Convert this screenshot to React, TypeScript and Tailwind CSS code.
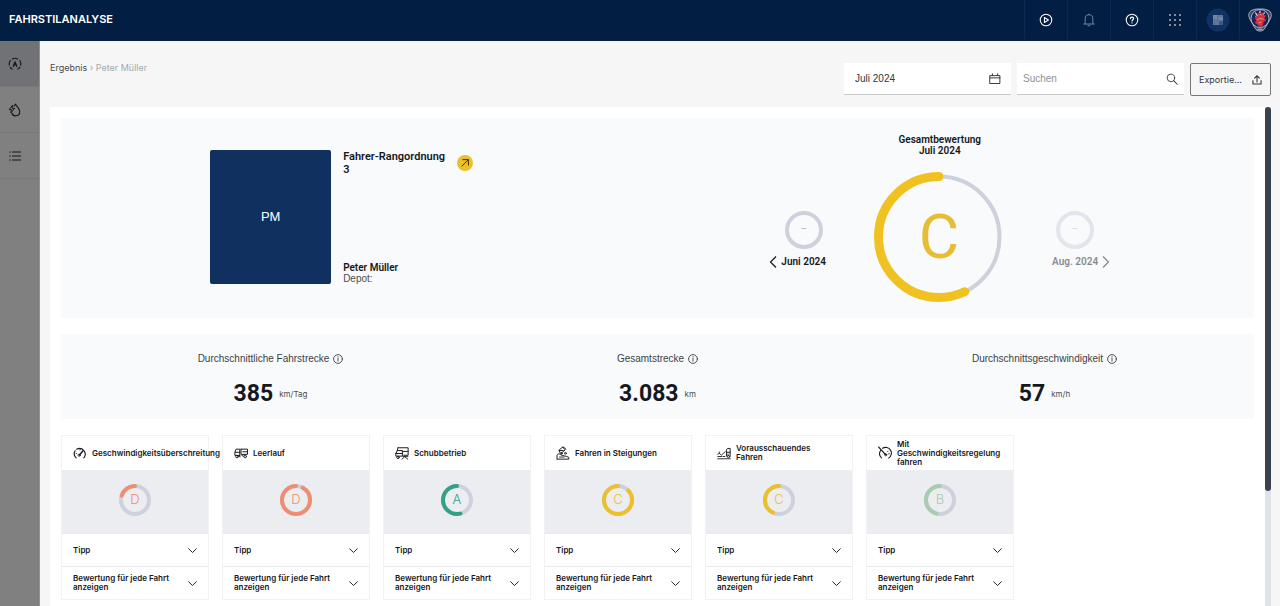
import type { ReactNode } from 'react';

type Grade = 'A' | 'B' | 'C' | 'D';

const gradeColors: Record<Grade, string> = {
  A: '#32a287',
  B: '#a9cbb0',
  C: '#ecc02c',
  D: '#ee8d72',
};

function Icon({ children, className = 'size-4', box = 16 }: { children: ReactNode; className?: string; box?: number }) {
  return (
    <svg className={`shrink-0 ${className}`} viewBox={`0 0 ${box} ${box}`} fill="none" stroke="currentColor" strokeWidth="1" strokeLinecap="round" strokeLinejoin="round" aria-hidden="true">
      {children}
    </svg>
  );
}

const SpeedIcon = () => (
  <Icon className="size-3.5">
    <path d="M3.6 13.6A6.600 6.600 0 0 1 2.400 5.400M4.200 3.600A6.600 6.600 0 0 1 12.400 13.600" strokeWidth="1.3" />
    <path d="M7.6 10L11.2 5.8" strokeWidth="1.6" />
    <circle cx="7" cy="10.6" r="1.2" />
    <path d="M3.6 8.5H4.2M8 4V4.6" />
  </Icon>
);

const TruckIdleIcon = () => (
  <Icon className="size-3.5">
    <path d="M6.6 10.8H1V7.4L2.4 3.6H6.6V10.8M1.2 7.2H6.6M8 3.6H15.4V9.6H8V3.6M10 6.6H15.4" strokeWidth="1.1" />
    <circle cx="3.4" cy="12" r="1.5" strokeWidth="1.1" />
    <circle cx="12.8" cy="12" r="1.5" strokeWidth="1.1" />
    <path d="M5 12.2H7M9 10.8L11.2 11.8" strokeWidth="1" />
  </Icon>
);

const CoastingIcon = () => (
  <Icon className="size-3.5">
    <path d="M3.4 2H15V10.6H10M1 8.6L2.6 5.2H8.4V8.6M1 8.6H8.4V11.6H1V8.6M3.4 2L2.6 5M8.4 6.2H15" strokeWidth="1.1" />
    <circle cx="3.4" cy="13" r="1.4" strokeWidth="1.1" />
    <path d="M8 15L11 12.2L14.6 15M9 11.8H14.8" strokeWidth="1.1" />
  </Icon>
);

const HillIcon = () => (
  <Icon className="size-3.5">
    <path d="M4.4 7.4L3.6 4.6L7.6 1.2L10.4 4.4L6.4 8M7.6 1.2L9.4 1.6L11 3.6M3.4 5L8.2 5.2" strokeWidth="1.1" />
    <path d="M1.2 14.6V10.4C3 7.8 4.6 9.8 6.4 10.4C9 11.4 11 11.2 14.6 13V15H1.2" strokeWidth="1.1" />
    <circle cx="6" cy="8.4" r="1.1" />
    <circle cx="10.8" cy="8.4" r="1.1" />
    <path d="M4 12.6H9.4" />
  </Icon>
);

const AnticipateIcon = () => (
  <Icon className="size-3.5">
    <path d="M10.8 11.6V4.4L12 2.8H15V11.6M10.8 7.2H15M12.6 9.2V11.2" strokeWidth="1.1" />
    <path d="M.8 9.4L3 8.4L5 10.6L9.4 6.4M1 12H5.6M7 12H9M.8 14.6H15.2M2.6 8.2V6.8" strokeWidth="1" />
    <circle cx="13.2" cy="12.2" r="1.3" />
  </Icon>
);

const CruiseIcon = () => (
  <Icon className="size-3.5">
    <path d="M5.2 2.6A6.6 6.6 0 1 1 12.2 13.8M3 5.2A6.6 6.6 0 0 0 4 13.6" strokeWidth="1.2" />
    <path d="M.8 1.2L8.4 9.6" strokeWidth="1.4" />
    <circle cx="8.8" cy="10" r="1.2" />
    <path d="M11.6 5.8l-.6.6M13 9h-.8" />
  </Icon>
);

const Chevron = () => (
  <svg className="w-[9px] h-[9px] shrink-0" viewBox="0 0 9 9" fill="none" stroke="#22252b" strokeWidth="1" aria-hidden="true">
    <path d="M.4 2.5L4.5 6.5L8.6 2.5" />
  </svg>
);

const InfoIcon = () => (
  <Icon className="size-2.5" box={10}>
    <circle cx="5" cy="5" r="4.4" strokeWidth=".9" />
    <path d="M5 4.4V7.2M5 2.6V3.1" strokeWidth=".9" />
  </Icon>
);

function GradeRing({ size, stroke, trackStroke = stroke, value, color, track = '#cdd1dd' }: { size: number; stroke: number; trackStroke?: number; value: number; color: string; track?: string }) {
  const c = size / 2;
  const r = (size - stroke) / 2;
  return (
    <svg width={size} height={size} viewBox={`0 0 ${size} ${size}`} fill="none" aria-hidden="true">
      <circle cx={c} cy={c} r={r} stroke={track} strokeWidth={trackStroke} />
      {value > 0 && (
        <circle r={r} stroke={color} strokeWidth={stroke} strokeLinecap="round" pathLength="100" strokeDasharray={`${value} 100`} transform={`translate(${c} ${c}) rotate(-90) scale(1 -1)`} />
      )}
    </svg>
  );
}

const categories: { title: string; icon: ReactNode; grade: Grade; value: number }[] = [
  { title: 'Geschwindigkeitsüberschreitung', icon: <SpeedIcon />, grade: 'D', value: 20 },
  { title: 'Leerlauf', icon: <TruckIdleIcon />, grade: 'D', value: 92 },
  { title: 'Schubbetrieb', icon: <CoastingIcon />, grade: 'A', value: 54 },
  { title: 'Fahren in Steigungen', icon: <HillIcon />, grade: 'C', value: 87 },
  { title: 'Vorausschauendes Fahren', icon: <AnticipateIcon />, grade: 'C', value: 43 },
  { title: 'Mit Geschwindigkeitsregelung fahren', icon: <CruiseIcon />, grade: 'B', value: 46 },
];

const stats = [
  { label: 'Durchschnittliche Fahrstrecke', value: '385', unit: 'km/Tag' },
  { label: 'Gesamtstrecke', value: '3.083', unit: 'km' },
  { label: 'Durchschnittsgeschwindigkeit', value: '57', unit: 'km/h' },
];

function Header() {
  const cell = 'w-[43px] h-full flex items-center justify-center border-l border-[#0d2950]';
  return (
    <header className="h-[41px] shrink-0 flex items-center justify-between bg-[#021e42] text-white overflow-hidden">
      <h1 className="pl-[9px] pb-1 font-[Inter,sans-serif] text-[11px] leading-4 font-semibold">FAHRSTILANALYSE</h1>
      <nav className="h-full flex pb-[2px]">
        <button className={cell} aria-label="Einführung">
          <Icon className="size-3.5">
            <circle cx="8" cy="8" r="6.6" strokeWidth="1.2" />
            <path d="M6.2 5.2V10.8L10.8 8Z" strokeWidth="1.2" />
          </Icon>
        </button>
        <button className={`${cell} text-[#7587a0]`} aria-label="Benachrichtigungen">
          <Icon className="size-3.5">
            <path d="M2 12.6H14M3.6 12.4V6.6A4.4 4.6 0 0 1 12.4 6.6V12.4M6.8 14.6H9.2M8 1.2V2" strokeWidth="1.1" />
          </Icon>
        </button>
        <button className={cell} aria-label="Hilfe">
          <Icon className="size-3.5">
            <circle cx="8" cy="8" r="6.6" strokeWidth="1.2" />
            <path d="M6.2 6.4C6.2 4.2 9.8 4.2 9.8 6.4C9.8 7.6 8 7.8 8 9.2M8 11.2V11.3" strokeWidth="1.4" />
          </Icon>
        </button>
        <button className={cell} aria-label="Anwendungen">
          <svg className="size-3" viewBox="0 0 12 12" fill="currentColor" aria-hidden="true">
            {[1, 6, 11].map((y) => [1, 6, 11].map((x) => <rect key={`${x}-${y}`} x={x - 0.7} y={y - 0.7} width="1.4" height="1.4" />))}
          </svg>
        </button>
        <button className={cell} aria-label="Profil">
          <svg className="size-6" viewBox="0 0 24 24" aria-hidden="true">
            <circle cx="12" cy="12" r="11.5" fill="#0f3263" />
            <rect x="7" y="7" width="10" height="10" fill="#5e7799" />
            <path d="M7 7h4v4H7zM13 9h4v3h-4z" fill="#7186a4" />
            <path d="M13 13h4v4h-4z" fill="#3f5b82" />
          </svg>
        </button>
        <a href="#" className="w-[41px] h-full flex items-center justify-center border-l border-[#0d2950]" aria-label="Startseite">
          <svg className="size-6" viewBox="0 0 24 24" fill="none" aria-hidden="true">
            <path d="M12 1C16.500 .6 20 1.800 22 3.500C24 6 23.400 9 22 11.500C20 14.500 18.500 18 16 21.500C14 23.600 10 23.600 8 21.500C5.500 18 4 14.500 2 11.500C.6 9 0 6 2 3.500C4 1.800 7.500 .6 12 1Z" fill="#3d4a6b" stroke="#c4c9d4" strokeWidth=".8" />
            <circle cx="12" cy="10.500" r="9" fill="#14245c" stroke="#e1e3ea" strokeWidth=".7" />
            <path d="M8 4.500L10 6L11 3.500L12.600 5.500L15.500 4L15 7L18 7.500L16.400 10L18 12.500L15.500 14L15 17.500L12.400 19L9.800 17L7 15L8.200 12L6.200 10L8.600 9Z" fill="#d5303c" />
            <path d="M7 8.500L10.500 7M9 12L12 10.500L15.500 11M10.500 15L13.500 14M12 6L13.800 7.500" stroke="#f3c7cc" strokeWidth=".6" />
            <path d="M7.500 4.500L8.500 7M12 2.500V5M16.500 4.500L15.500 6.500" stroke="#fff" strokeWidth="1" />
            <path d="M9.500 21.300H14.500" stroke="#c4c9d4" strokeWidth=".9" />
          </svg>
        </a>
      </nav>
    </header>
  );
}

function Sidebar() {
  const item = 'h-[46px] flex items-center pl-2 border-b border-[#777]';
  return (
    <aside className="w-10 shrink-0 bg-[#808080] border-r border-[#929292] text-[#15171b]">
      <a href="#" aria-label="Auswertung" className={`${item} bg-[#717276]`}>
        <Icon className="size-3.5">
          <path d="M5 2.200A6.600 6.600 0 0 1 11 2.200M2.600 4A6.600 6.600 0 0 0 1.500 9.400M13.400 4A6.600 6.600 0 0 1 14.500 9.400M2.600 11.800A6.600 6.600 0 0 0 4.600 13.800M13.400 11.800A6.600 6.600 0 0 1 11.400 13.800" strokeWidth="1.300" />
          <path d="M6 10.600L8 5.600L10 10.600M6.800 9H9.200" strokeWidth="1.500" />
        </Icon>
      </a>
      <a href="#" aria-label="Verbrauch" className={item}>
        <Icon className="size-3.5">
          <path d="M8.400 1.400C11 4.600 13.400 7 13.400 10A4.600 4.600 0 0 1 4.400 11.400M8.400 1.400L7 3.400" strokeWidth="1.300" />
          <path d="M5 2.800L1.400 7.600H4L3.200 11.200L7.600 6H5Z" strokeWidth="1.100" />
        </Icon>
      </a>
      <a href="#" aria-label="Liste" className={item}>
        <Icon className="size-3.5">
          <path d="M5 3.400H14.400M5 8H14.400M5 12.600H14.400M2 3.400H2.600M2 8H2.600M2 12.600H2.600" strokeWidth="1.200" />
        </Icon>
      </a>
    </aside>
  );
}

function Toolbar() {
  return (
    <div className="flex items-start justify-between pt-[22px] pb-[11px]">
      <nav className="font-[Inter,sans-serif] text-[9px] leading-[10px] text-[#4a4c52]">
        <a href="#">Ergebnis</a> <span className="text-[#a5a7b0]">› Peter Müller</span>
      </nav>
      <div className="flex gap-[6px] text-[#33363c]">
        <label className="w-[167px] h-8 flex items-center bg-white border-b border-[#c9c9cc] pl-[11px] pr-[10px]">
          <input className="min-w-0 flex-1 text-[10px] outline-none" defaultValue="Juli 2024" aria-label="Monat" />
          <Icon className="size-3">
            <path d="M1.500 3.500H14.500V14H1.500ZM1.500 6.500H14.500M4.500 1V3.500M11.500 1V3.500" strokeWidth="1.300" />
          </Icon>
        </label>
        <label className="w-[167px] h-8 flex items-center bg-white border-b border-[#c9c9cc] pl-[6px] pr-[6px]">
          <input className="min-w-0 flex-1 text-[10px] outline-none placeholder:text-[#8e9096]" placeholder="Suchen" aria-label="Suchen" />
          <Icon className="size-3">
            <circle cx="6.500" cy="6.500" r="5" strokeWidth="1.200" />
            <path d="M10.200 10.200L15 15" strokeWidth="1.400" />
          </Icon>
        </label>
        <button className="w-[81px] h-[33px] flex items-center justify-between rounded-xs border border-[#75777b] pl-2 pr-2 font-[Inter,sans-serif] text-[9px]">
          Exportie...
          <Icon className="size-2.5">
            <path d="M8 11V1.500M4.200 5L8 1.200L11.800 5M1.500 9V14.500H14.500V9" strokeWidth="1.700" />
          </Icon>
        </button>
      </div>
    </div>
  );
}

function DriverSummary() {
  return (
    <section className="h-[200px] grid grid-cols-2 bg-[#f8fafc]">
      <div className="ml-[25%] mt-8 flex">
        <div className="w-[121px] h-[134px] flex items-center justify-center rounded-xs bg-[#10315f] text-white text-[13px]">PM</div>
        <div className="ml-3 h-[134px] flex flex-col justify-between">
          <div className="flex items-center gap-3">
            <h2 className="font-[Roboto] text-[11px] leading-[13px] font-semibold">
              Fahrer-Rangordnung
              <br />3
            </h2>
            <svg className="size-4" viewBox="0 0 16 16" fill="none" stroke="#3a3210" aria-hidden="true">
              <circle cx="8" cy="8" r="8" fill="#ecc02c" stroke="none" />
              <path d="M4.700 11.300L11.300 4.700M5.500 4.600H11.400V10.500" />
            </svg>
          </div>
          <div className="text-[10px] leading-[11px]">
            <div className="font-[Roboto] font-semibold">Peter Müller</div>
            <div className="text-[#4b4d55]">Depot:</div>
          </div>
        </div>
      </div>

      <div className="pt-4 pr-8 flex flex-col items-center font-[Roboto]">
        <h2 className="text-[10px] leading-[11px] font-semibold text-center">
          Gesamtbewertung
          <br />
          Juli 2024
        </h2>
        <div className="mt-4 flex items-center gap-12 text-[10px] leading-3 font-semibold">
          <div className="pt-1 grid grid-cols-[10px_auto] items-center gap-x-[2px] gap-y-[7px]">
            <div className="col-start-2 size-[38px] relative justify-self-center">
              <GradeRing size={38} stroke={4} value={0} color="#ecc02c" />
              <span className="absolute inset-0 flex items-center justify-center font-light text-[#9a9ca6]">–</span>
            </div>
            <button className="col-start-1 contents">
              <svg className="w-2 h-3" viewBox="0 0 8 12" fill="none" stroke="currentColor" aria-hidden="true">
                <path d="M7 .5L1.500 6L7 11.500" strokeWidth="1.200" />
              </svg>
              Juni 2024
            </button>
          </div>
          <div className="relative">
            <GradeRing size={130} stroke={9} trackStroke={4} value={57} color="#efc222" />
            <span className="absolute inset-0 flex items-center justify-center text-[62px] font-normal text-[#e6bd33]">C</span>
          </div>
          <div className="pt-1 grid grid-cols-[auto_10px] items-center gap-x-[2px] gap-y-[7px] opacity-50">
            <div className="size-[38px] relative justify-self-center">
              <GradeRing size={38} stroke={4} value={0} color="#ecc02c" />
              <span className="absolute inset-0 flex items-center justify-center font-light text-[#9a9ca6]">–</span>
            </div>
            <button className="contents" disabled>
              <span className="col-start-1">Aug. 2024</span>
              <svg className="w-2 h-3 justify-self-end" viewBox="0 0 8 12" fill="none" stroke="currentColor" aria-hidden="true">
                <path d="M1 .5L6.500 6L1 11.500" strokeWidth="1.200" />
              </svg>
            </button>
          </div>
        </div>
      </div>
    </section>
  );
}

function Stats() {
  return (
    <section className="mt-4 h-[85px] px-4 grid grid-cols-3 bg-[#f8fafc]">
      {stats.map((s) => (
        <div key={s.label} className="pt-[19px] flex flex-col items-center">
          <div className="flex items-center gap-1 text-[10px] leading-3 text-[#3c3f46]">
            {s.label}
            <InfoIcon />
          </div>
          <div className="mt-[15px] flex items-center gap-[6px]">
            <span className="font-[Roboto] text-[23px] leading-[28px] font-bold">{s.value}</span>
            <span className="font-[Inter,sans-serif] text-[8px] text-[#4b4d55]">{s.unit}</span>
          </div>
        </div>
      ))}
    </section>
  );
}

function Categories() {
  const row = 'w-full h-[33px] pl-[11px] pr-[11px] flex items-center justify-between text-left border-t border-[#e8e9ec]';
  return (
    <section className="mt-4 pb-[6px] flex gap-[13px]">
      {categories.map((c) => (
        <article key={c.title} className="w-[148px] shrink-0 bg-white border border-[#f2f2f4] font-[Inter,sans-serif] text-[8px] leading-[9px] font-semibold">
          <h3 className="h-[34px] pl-[11px] flex items-center gap-[5px]">
            {c.icon}
            <span className="w-[96px]">{c.title}</span>
          </h3>
          <div className="h-[63px] pb-1 flex items-center justify-center bg-[#ecedf1]">
            <div className="relative">
              <GradeRing size={32} stroke={4} value={c.value} color={gradeColors[c.grade]} />
              <span className="absolute inset-0 flex items-center justify-center text-[13px] font-light" style={{ color: gradeColors[c.grade] }}>
                {c.grade}
              </span>
            </div>
          </div>
          <button className={row}>
            Tipp
            <Chevron />
          </button>
          <button className={row}>
            <span className="w-[112px]">Bewertung für jede Fahrt anzeigen</span>
            <Chevron />
          </button>
        </article>
      ))}
    </section>
  );
}

export default function App() {
  return (
    <div className="h-screen flex flex-col bg-[#f6f6f6] font-['Liberation_Sans',sans-serif] text-[#16181d]">
      <Header />
      <div className="flex-1 min-h-0 flex">
        <Sidebar />
        <main className="flex-1 min-w-0 flex flex-col pl-[10px] pr-[9px]">
          <Toolbar />
          <div className="flex-1 min-h-0 flex bg-white">
            <div className="flex-1 min-w-0 overflow-hidden p-[11px]">
              <DriverSummary />
              <Stats />
              <Categories />
            </div>
            <div className="w-[6px] bg-[#dfe3e9]">
              <div className="h-[77%] rounded-full bg-[#3a424d]" />
            </div>
          </div>
        </main>
      </div>
    </div>
  );
}
